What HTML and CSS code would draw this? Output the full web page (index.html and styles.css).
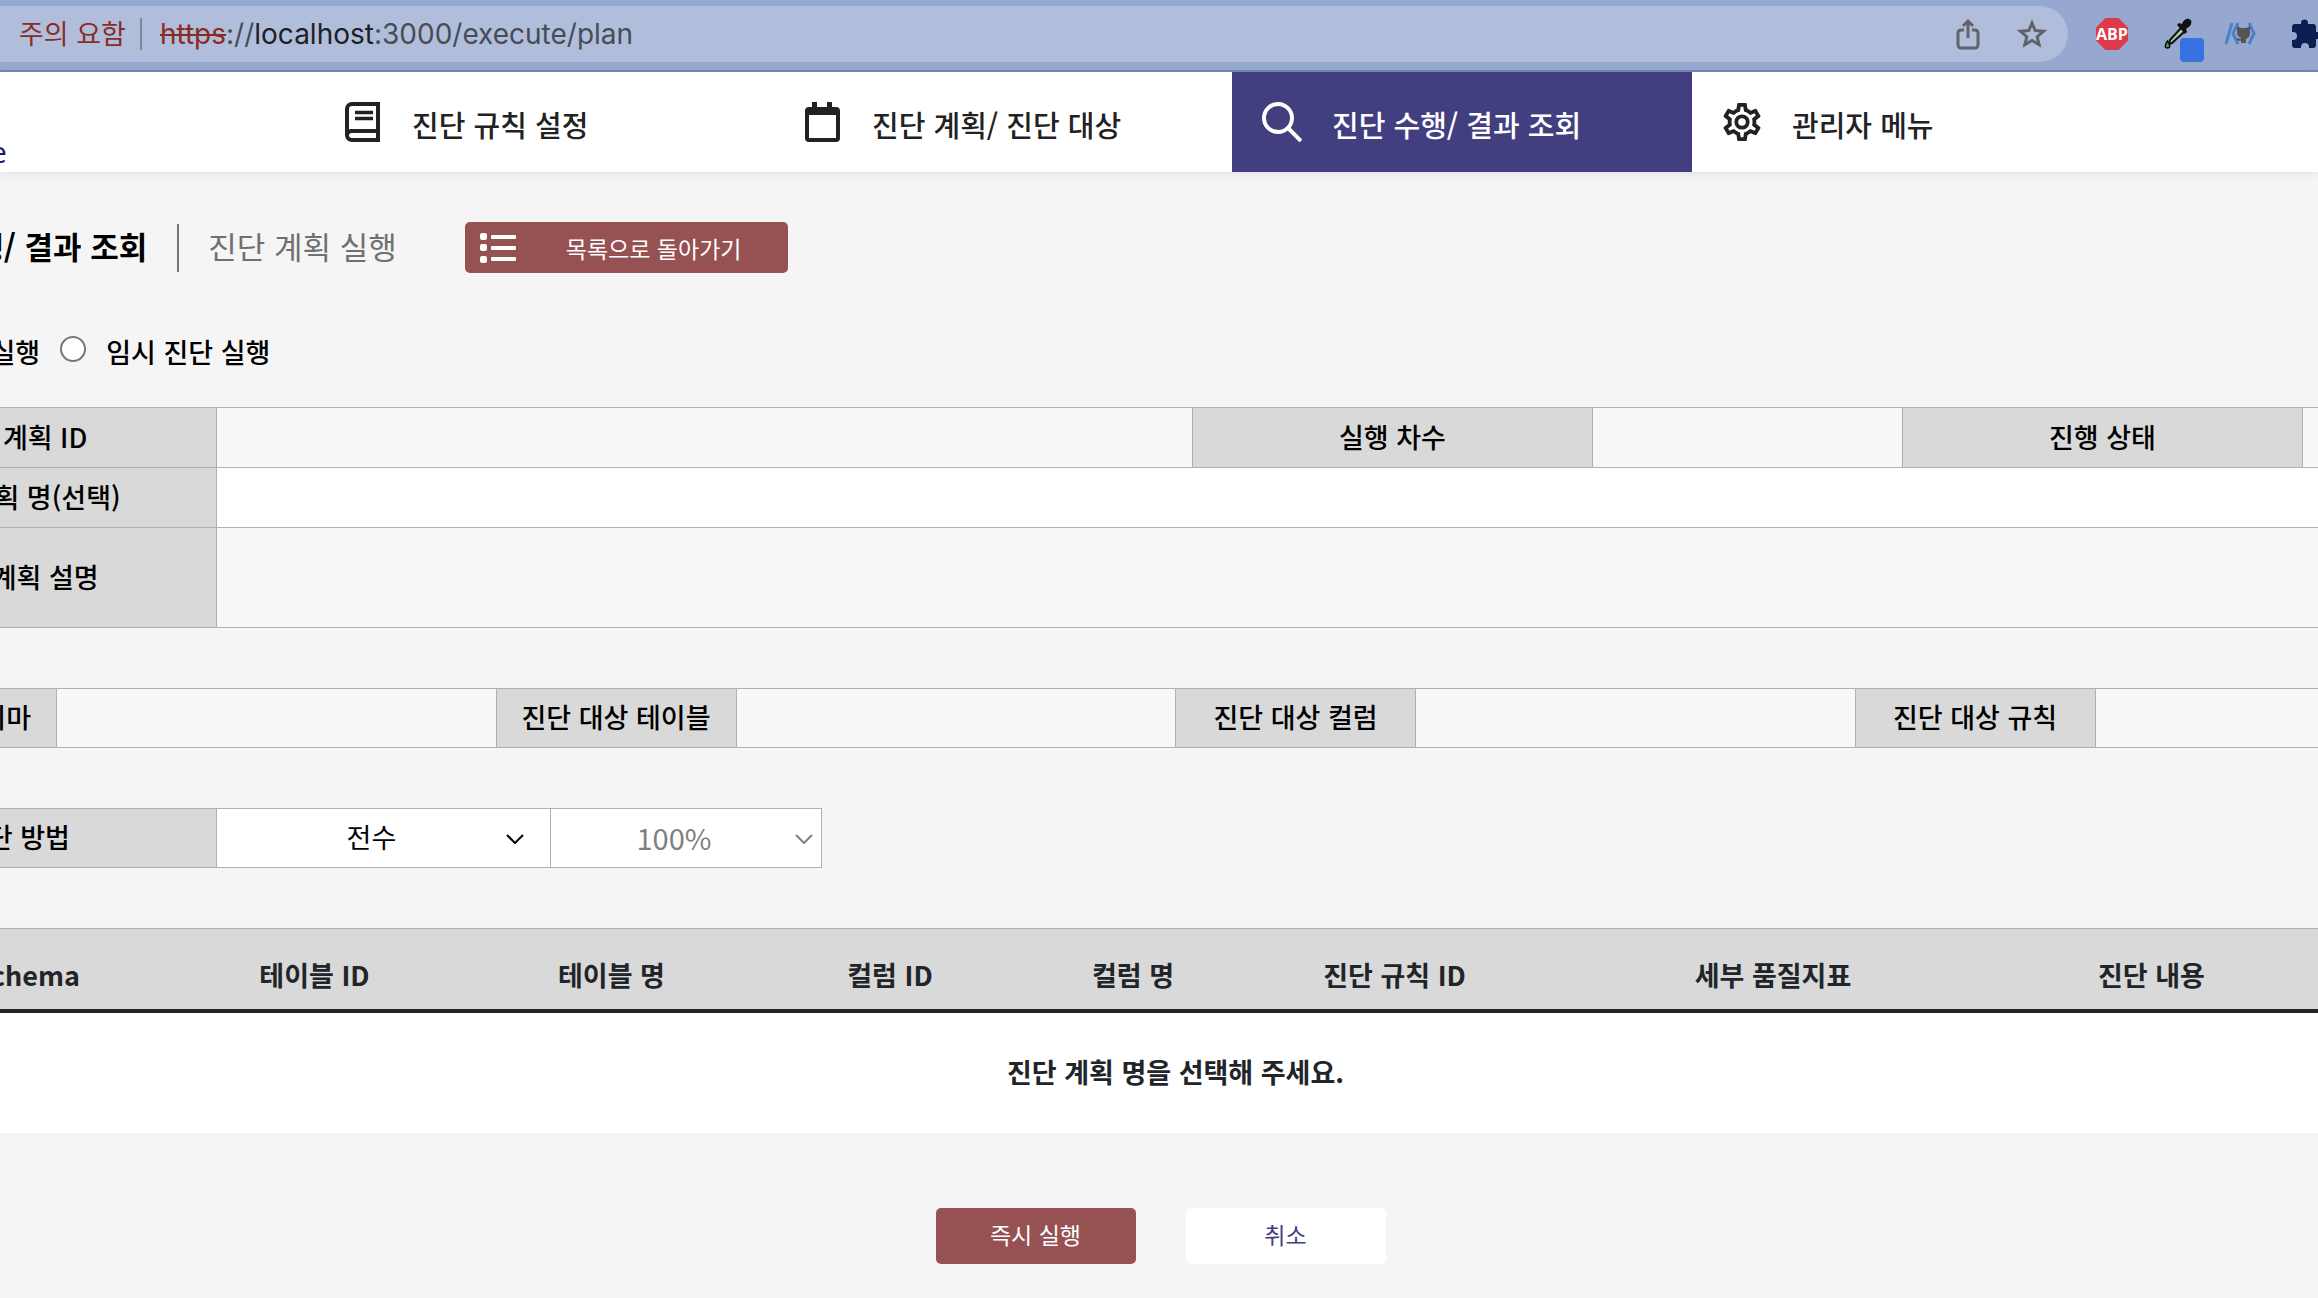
FILE: index.html
```html
<!DOCTYPE html>
<html lang="ko">
<head>
<meta charset="utf-8">
<title>진단 계획 실행</title>
<link rel="stylesheet" href="styles.css">
</head>
<body>
<div class="toolbar">
  <div class="address">
    <span class="address-warning">주의 요함</span>
    <span class="address-divider"></span>
    <span class="address-url"><s>https</s>://<b>localhost</b>:3000/execute/plan</span>
    <button class="tool share" type="button" aria-label="공유">
      <svg width="24" height="32" viewBox="0 0 24 32" fill="none" stroke="#5f6368" stroke-width="3"><path d="M8 12H5a3 3 0 0 0-3 3v12a3 3 0 0 0 3 3h14a3 3 0 0 0 3-3V15a3 3 0 0 0-3-3h-3M12 20V4M7 8l5-5 5 5"/></svg>
    </button>
    <button class="tool" type="button" aria-label="북마크">
      <svg width="30" height="30" viewBox="0 0 30 30" fill="none" stroke="#5f6368" stroke-width="3"><path d="M15 4l3.200 7.600 8.200.700-6.200 5.400 1.900 8L15 21.400 7.900 25.700l1.900-8-6.200-5.400 8.200-.700z"/></svg>
    </button>
  </div>
  <div class="extensions">
    <button class="tool" type="button" aria-label="광고 차단">
      <svg width="32" height="32" viewBox="0 0 32 32"><path fill="#de3a4b" d="M9.500 0h13L32 9.500v13L22.500 32h-13L0 22.500v-13z"/><text x="16" y="22" text-anchor="middle" class="abp">ABP</text></svg>
    </button>
    <button class="tool picker-tool" type="button" aria-label="색상 추출">
      <svg width="40" height="44" viewBox="0 0 40 44"><path d="M17 10L6 22l-1 4 3-1L21 13z" fill="#a5d6a0" stroke="#111" stroke-width="2"/><path d="M13 7l2-2 3 1c1-3 4-6 7-5s3 4 1 7l-4 3 1 3-2 2z" fill="#111"/><path d="M3.500 23c-3 4-3 7 0 7s3-3 0-7z" fill="#4f9a4c" stroke="#111" stroke-width="1.500"/><rect x="16" y="20" width="24" height="24" rx="4" fill="#3872e0"/></svg>
    </button>
    <button class="tool" type="button" aria-label="깃허브">
      <svg width="32" height="24" viewBox="0 0 32 24"><path d="M2 22L8 1M14 1L9 11.500 14 22M25 1l5 10.500L25 22" fill="none" stroke="#4a80c8" stroke-width="3"/><path d="M13 4l4 2h5l4-2v7c0 4-2 5-4 6v4h-5v-2c-3 0-4-1-5-3 2 0 3 1 5 1v-1c-3-1-4-3-4-6z" fill="#555"/></svg>
    </button>
    <button class="tool" type="button" aria-label="확장 프로그램">
      <svg width="30" height="30" viewBox="0 0 30 30"><path fill="#0a1f52" d="M3 5h6V4a3.500 3.500 0 0 1 7 0v1h5a3 3 0 0 1 3 3v5h1a3.500 3.500 0 0 1 0 7h-1v6a3 3 0 0 1-3 3h-4v-1a4 4 0 0 0-8 0v1H3a3 3 0 0 1-3-3v-5h1a4 4 0 0 0 0-8H0V8a3 3 0 0 1 3-3z"/></svg>
    </button>
  </div>
</div>

<header class="header">
  <a class="brand" href="#">e</a>
  <nav class="menu">
    <a class="menu-item" href="#">
      <svg class="menu-icon" viewBox="0 0 40 40" fill="none" stroke="currentColor" stroke-width="4"><path d="M38 38H10a5 5 0 0 1-5-5V7a5 5 0 0 1 5-5h26v27H10a4.500 4.500 0 0 0-5 4M36 29v9"/><path d="M13 10.500h18M13 16.500h18" stroke-width="3.500"/></svg>
      <span>진단 규칙 설정</span>
    </a>
    <a class="menu-item" href="#">
      <svg class="menu-icon" viewBox="0 0 40 40"><path fill="currentColor" fill-rule="evenodd" d="M10 0h5v5h10V0h5v5h4a4 4 0 0 1 4 4v27a4 4 0 0 1-4 4H7a4 4 0 0 1-4-4V9a4 4 0 0 1 4-4h3zM7 13v23h27V13z"/></svg>
      <span>진단 계획/ 진단 대상</span>
    </a>
    <a class="menu-item active" href="#" aria-current="page">
      <svg class="menu-icon" viewBox="0 0 40 40" fill="none" stroke="currentColor" stroke-width="4"><circle cx="16" cy="16" r="14"/><path d="M26 26l13 13"/></svg>
      <span>진단 수행/ 결과 조회</span>
    </a>
    <a class="menu-item" href="#">
      <svg class="menu-icon" viewBox="1.500 1.500 21 21" fill="currentColor"><path d="M19.430 12.980c.040-.320.070-.640.070-.980s-.030-.660-.070-.980l2.110-1.650c.190-.150.240-.420.120-.640l-2-3.460c-.120-.220-.390-.300-.610-.220l-2.490 1c-.520-.400-1.080-.730-1.690-.980l-.380-2.650A.488.488 0 0 0 14 2h-4c-.250 0-.460.180-.490.420l-.380 2.650c-.610.250-1.170.590-1.690.980l-2.490-1c-.230-.090-.490 0-.610.220l-2 3.460c-.130.220-.070.490.120.640l2.110 1.650c-.040.320-.070.650-.070.980s.030.660.070.980l-2.110 1.650c-.190.150-.240.420-.120.640l2 3.460c.120.220.390.300.610.220l2.490-1c.520.400 1.080.730 1.690.980l.380 2.650c.030.240.240.420.490.420h4c.250 0 .460-.180.490-.420l.380-2.650c.610-.250 1.170-.590 1.690-.980l2.490 1c.230.090.490 0 .610-.220l2-3.460c.120-.220.070-.490-.120-.640zM17.450 11.270c.040.310.050.520.050.730 0 .210-.020.430-.050.730l-.140 1.130.890.700 1.080.840-.700 1.210-1.270-.510-1.040-.420-.900.680c-.430.320-.840.560-1.250.730l-1.060.430-.160 1.130-.200 1.350h-1.400l-.190-1.350-.160-1.130-1.060-.430c-.430-.180-.830-.410-1.230-.710l-.910-.700-1.060.430-1.270.510-.700-1.210 1.080-.840.890-.700-.140-1.130c-.030-.310-.050-.540-.050-.740s.020-.430.050-.730l.140-1.130-.890-.700-1.080-.840.700-1.210 1.270.510 1.040.420.900-.680c.430-.320.840-.560 1.250-.730l1.060-.430.160-1.130.200-1.350h1.390l.190 1.350.160 1.130 1.060.430c.430.180.830.410 1.230.710l.910.700 1.060-.430 1.270-.510.700 1.210-1.070.850-.890.700zM12 8a4 4 0 1 0 0 8 4 4 0 0 0 0-8zm0 6a2 2 0 1 1 0-4 2 2 0 0 1 0 4z"/></svg>
      <span>관리자 메뉴</span>
    </a>
  </nav>
</header>

<main class="page">
  <div class="heading">
    <h1 class="heading-title">진단 수행/ 결과 조회</h1>
    <span class="heading-divider"></span>
    <h2 class="heading-sub">진단 계획 실행</h2>
    <button class="button button-list" type="button">
      <svg width="36" height="30" viewBox="0 0 36 30" fill="#fff"><rect width="7" height="7" rx="2"/><rect y="11" width="7" height="7" rx="2"/><rect y="23" width="7" height="7" rx="2"/><rect x="11" y="2" width="25" height="4" rx="1"/><rect x="11" y="13" width="25" height="4" rx="1"/><rect x="11" y="24" width="25" height="4" rx="1"/></svg>
      <span>목록으로 돌아가기</span>
    </button>
  </div>

  <div class="modes">
    <input class="radio" type="radio" name="mode" id="mode-plan" checked>
    <label for="mode-plan">진단 계획 실행</label>
    <input class="radio" type="radio" name="mode" id="mode-temp">
    <label for="mode-temp">임시 진단 실행</label>
  </div>

  <table class="form plan">
    <colgroup><col class="label-wide"><col><col class="label-wide"><col class="value-round"><col class="label-wide"><col class="value-state"></colgroup>
    <tr><th>진단 계획 ID</th><td></td><th>실행 차수</th><td></td><th>진행 상태</th><td></td></tr>
    <tr><th>진단 계획 명(선택)</th><td class="editable" colspan="5"></td></tr>
    <tr class="tall"><th>진단 계획 설명</th><td colspan="5"></td></tr>
  </table>

  <table class="form targets">
    <colgroup><col class="label-narrow"><col><col class="label-narrow"><col><col class="label-narrow"><col><col class="label-narrow"><col></colgroup>
    <tr><th>진단 대상 스키마</th><td></td><th>진단 대상 테이블</th><td></td><th>진단 대상 컬럼</th><td></td><th>진단 대상 규칙</th><td></td></tr>
  </table>

  <div class="method">
    <label class="method-label" for="method">진단 방법</label>
    <div class="picker picker-method">
      <select id="method"><option>전수</option></select>
      <svg class="chevron" width="18" height="10" viewBox="0 0 18 10" fill="none" stroke="#000" stroke-width="2"><path d="M1 1l8 8 8-8"/></svg>
    </div>
    <div class="picker picker-rate">
      <select aria-label="비율" disabled><option>100%</option></select>
      <svg class="chevron" width="18" height="10" viewBox="0 0 18 10" fill="none" stroke="#808080" stroke-width="2"><path d="M1 1l8 8 8-8"/></svg>
    </div>
  </div>

  <table class="results">
    <colgroup><col class="c-check"><col class="c-schema"><col class="c-table"><col class="c-table"><col class="c-col"><col class="c-colname"><col class="c-table"><col class="c-quality"><col class="c-table"><col class="c-last"></colgroup>
    <thead>
      <tr><th></th><th>Schema</th><th>테이블 ID</th><th>테이블 명</th><th>컬럼 ID</th><th>컬럼 명</th><th>진단 규칙 ID</th><th>세부 품질지표</th><th>진단 내용</th><th></th></tr>
    </thead>
    <tbody>
      <tr><td colspan="10">진단 계획 명을 선택해 주세요.</td></tr>
    </tbody>
  </table>

  <div class="actions">
    <button class="button" type="button">즉시 실행</button>
    <button class="button button-plain" type="button">취소</button>
  </div>
</main>
</body>
</html>
```
FILE: styles.css
```css
* { box-sizing: border-box; }

body {
  margin: 0;
  background: #f5f5f5;
  color: #000;
  font-family: "Noto Sans CJK KR", sans-serif;
  font-size: 27px;
  font-weight: 500;
  line-height: 40px;
  overflow-x: hidden;
}

button, select { font: inherit; }
a { color: inherit; text-decoration: none; }

/* Browser toolbar */
.toolbar {
  display: flex;
  align-items: center;
  height: 72px;
  padding-bottom: 2px;
  background: #96a7d0;
  border-bottom: 2px solid #7386b0;
  overflow: hidden;
}
.address {
  flex: 1;
  display: flex;
  align-items: center;
  height: 56px;
  padding: 0 21px 0 19px;
  background: #b1bedb;
  border-radius: 0 28px 28px 0;
  font-weight: 400;
}
.address-warning { padding-bottom: 2px; color: #8a2c25; }
.address-divider { width: 2px; height: 32px; margin: 0 18px 0 14px; background: #7f8899; }
.address-url { flex: 1; color: #474c55; font-family: Inter, sans-serif; font-size: 28px; }
.address-url s { color: #8a2c25; }
.address-url b { color: #1d2026; font-weight: 400; }
.tool {
  display: flex;
  padding: 0;
  border: 0;
  background: none;
}
.share { margin-right: 37px; }
.extensions { display: flex; align-items: center; width: 250px; height: 56px; padding-left: 28px; gap: 36px; }
.picker-tool { align-self: flex-end; }
.extensions .tool:nth-child(3) { margin-left: -16px; }
.abp { fill: #fff; font: 700 16px "Open Sans", sans-serif; }

/* Site header */
.header {
  display: flex;
  height: 100px;
  background: #fff;
  box-shadow: 0 2px 8px rgba(0, 0, 0, 0.08);
}
.brand {
  width: 312px;
  padding-top: 60px;
  text-indent: -10px;
  color: #1d1777;
  font-family: "Open Sans", sans-serif;
  font-size: 30px;
  font-weight: 400;
  overflow: hidden;
}
.menu { display: flex; color: #222; font-size: 29px; }
.menu-item {
  display: flex;
  align-items: center;
  width: 460px;
  padding-left: 30px;
  gap: 30px;
}
.menu-item span { padding-top: 3px; }
.menu-icon { width: 40px; height: 40px; }
.menu-item.active { background: #423f80; color: #fff; }

/* Page content, scrolled sideways */
.page {
  width: calc(100% + 401px);
  margin-left: -184px;
  padding-top: 50px;
}
.heading { display: flex; align-items: center; padding-left: 65px; }
.heading-title, .heading-sub { padding-bottom: 3px; font-size: 31px; }
.heading-title { margin: 0; font-weight: 700; }
.heading-divider { width: 2px; height: 48px; margin: 0 29px 0 30px; background: #777; }
.heading-sub { margin: 0 68px 0 0; color: #707070; font-weight: 400; }

.button {
  width: 200px;
  height: 56px;
  padding: 0 0 3px;
  border: 0;
  border-radius: 5px;
  background: #965153;
  color: #fff;
  font-size: 23px;
  font-weight: 400;
}
.button-list {
  display: flex;
  align-items: center;
  width: 323px;
  height: 51px;
  padding: 0 0 0 15px;
  gap: 50px;
}
.button-plain { background: #fff; color: #423f80; }

.modes {
  display: flex;
  align-items: center;
  gap: 20px;
  margin-top: 59px;
  padding-left: 14px;
}
.radio {
  width: 26px;
  height: 26px;
  margin: 0 0 6px;
  appearance: none;
  border: 2px solid #777;
  border-radius: 50%;
  background: #fff;
}
.radio:checked { border: 8px solid #0075ff; }

.form {
  width: 100%;
  border-collapse: collapse;
  table-layout: fixed;
}
.form tr { height: 60px; }
.form .tall { height: 100px; }
.form th, .form td { padding: 0 0 2px; border: 1px solid #b0b0b0; }
.form th { background: #d9d9d9; font-weight: 500; }
.form td { background: #f8f8f8; }
.form .editable { background: #fff; }
.plan { margin-top: 35px; }
.targets { margin-top: 60px; }
.targets tr { height: 59px; }
.label-wide { width: 400px; }
.label-narrow { width: 240px; }
.value-round { width: 310px; }
.value-state { width: 232px; }

.method {
  display: flex;
  width: 1006px;
  height: 60px;
  margin-top: 60px;
  border: 1px solid #b0b0b0;
}
.method-label {
  display: flex;
  align-items: center;
  justify-content: center;
  width: 399px;
  padding-bottom: 2px;
  background: #d9d9d9;
}
.picker {
  position: relative;
  flex: 334;
  border-left: 1px solid #b0b0b0;
}
.picker select {
  width: 100%;
  height: 100%;
  padding: 0 28px 3px 4px;
  border: 0;
  appearance: none;
  background: #fff;
  color: #000;
  font-weight: 400;
  text-align: center;
  text-align-last: center;
}
.picker-rate { flex: 271; }
.picker select:disabled { color: #808080; font-size: 29px; opacity: 1; }
.chevron { position: absolute; right: 26px; top: 25px; pointer-events: none; }
.picker-rate .chevron { right: 8px; }

.results {
  width: 100%;
  margin-top: 60px;
  border-collapse: collapse;
  table-layout: fixed;
  color: #212529;
  text-align: center;
  font-weight: 700;
}
.results th {
  height: 82px;
  padding: 13px 0 0;
  background: #d9d9d9;
  border-top: 1px solid #b0b0b0;
  border-bottom: 4px solid #212529;
}
.results td { height: 122px; padding: 0 0 2px; background: #fff; }
.c-check { width: 72px; }
.c-schema { width: 278px; }
.c-table { width: 297px; }
.c-col { width: 260px; }
.c-colname { width: 226px; }
.c-quality { width: 460px; }
.c-last { width: 235px; }

.actions {
  display: flex;
  justify-content: center;
  gap: 50px;
  padding: 75px 30px 34px 0;
}
```
